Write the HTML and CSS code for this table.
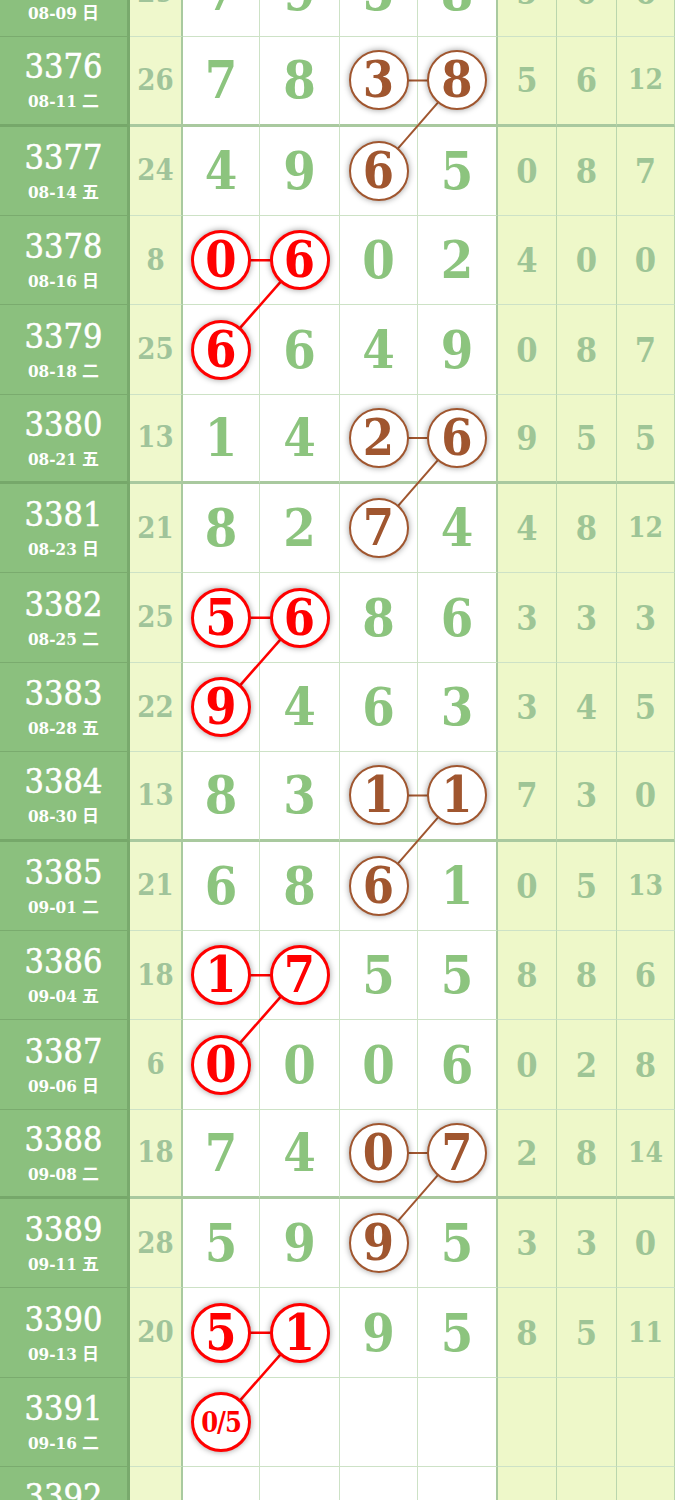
FILE: index.html
```html
<!DOCTYPE html>
<html lang="zh">
<head>
<meta charset="utf-8">
<title>走势图</title>
<link rel="stylesheet" href="styles.css">
</head>
<body>
<div class="board">
  <svg class="links" width="675" height="1610" viewBox="0 0 675 1610">
    <g class="lb">
      <line x1="378.5" y1="132.6" x2="457" y2="132.6"/><line x1="457" y1="132.6" x2="378.5" y2="222.9"/>
      <line x1="378.5" y1="490.1" x2="457" y2="490.1"/><line x1="457" y1="490.1" x2="378.5" y2="580.4"/>
      <line x1="378.5" y1="847.6" x2="457" y2="847.6"/><line x1="457" y1="847.6" x2="378.5" y2="937.9"/>
      <line x1="378.5" y1="1205.1" x2="457" y2="1205.1"/><line x1="457" y1="1205.1" x2="378.5" y2="1295.4"/>
    </g>
    <g class="lr">
      <line x1="221" y1="312.3" x2="299.5" y2="312.3"/><line x1="299.5" y1="312.3" x2="221" y2="401.7"/>
      <line x1="221" y1="669.8" x2="299.5" y2="669.8"/><line x1="299.5" y1="669.8" x2="221" y2="759.2"/>
      <line x1="221" y1="1027.3" x2="299.5" y2="1027.3"/><line x1="299.5" y1="1027.3" x2="221" y2="1116.7"/>
      <line x1="221" y1="1384.8" x2="299.5" y2="1384.8"/><line x1="299.5" y1="1384.8" x2="221" y2="1474.2"/>
    </g>
  </svg>

  <div class="row">
    <div class="c lab"><span class="no">3375</span><span class="dt">08-09 日</span></div>
    <div class="c sum">29</div>
    <div class="c w">7</div><div class="c w">9</div><div class="c w">5</div><div class="c w w4">8</div>
    <div class="c y">5</div><div class="c y">0</div><div class="c y">6</div>
  </div>
  <div class="row sep">
    <div class="c lab"><span class="no">3376</span><span class="dt">08-11 二</span></div>
    <div class="c sum">26</div>
    <div class="c w">7</div><div class="c w">8</div><div class="c w"><span class="ball b">3</span></div><div class="c w w4"><span class="ball b">8</span></div>
    <div class="c y">5</div><div class="c y">6</div><div class="c y two">12</div>
  </div>
  <div class="row">
    <div class="c lab"><span class="no">3377</span><span class="dt">08-14 五</span></div>
    <div class="c sum">24</div>
    <div class="c w">4</div><div class="c w">9</div><div class="c w"><span class="ball b">6</span></div><div class="c w w4">5</div>
    <div class="c y">0</div><div class="c y">8</div><div class="c y">7</div>
  </div>
  <div class="row">
    <div class="c lab"><span class="no">3378</span><span class="dt">08-16 日</span></div>
    <div class="c sum">8</div>
    <div class="c w"><span class="ball r">0</span></div><div class="c w"><span class="ball r">6</span></div><div class="c w">0</div><div class="c w w4">2</div>
    <div class="c y">4</div><div class="c y">0</div><div class="c y">0</div>
  </div>
  <div class="row">
    <div class="c lab"><span class="no">3379</span><span class="dt">08-18 二</span></div>
    <div class="c sum">25</div>
    <div class="c w"><span class="ball r">6</span></div><div class="c w">6</div><div class="c w">4</div><div class="c w w4">9</div>
    <div class="c y">0</div><div class="c y">8</div><div class="c y">7</div>
  </div>
  <div class="row sep">
    <div class="c lab"><span class="no">3380</span><span class="dt">08-21 五</span></div>
    <div class="c sum">13</div>
    <div class="c w">1</div><div class="c w">4</div><div class="c w"><span class="ball b">2</span></div><div class="c w w4"><span class="ball b">6</span></div>
    <div class="c y">9</div><div class="c y">5</div><div class="c y">5</div>
  </div>
  <div class="row">
    <div class="c lab"><span class="no">3381</span><span class="dt">08-23 日</span></div>
    <div class="c sum">21</div>
    <div class="c w">8</div><div class="c w">2</div><div class="c w"><span class="ball b">7</span></div><div class="c w w4">4</div>
    <div class="c y">4</div><div class="c y">8</div><div class="c y two">12</div>
  </div>
  <div class="row">
    <div class="c lab"><span class="no">3382</span><span class="dt">08-25 二</span></div>
    <div class="c sum">25</div>
    <div class="c w"><span class="ball r">5</span></div><div class="c w"><span class="ball r">6</span></div><div class="c w">8</div><div class="c w w4">6</div>
    <div class="c y">3</div><div class="c y">3</div><div class="c y">3</div>
  </div>
  <div class="row">
    <div class="c lab"><span class="no">3383</span><span class="dt">08-28 五</span></div>
    <div class="c sum">22</div>
    <div class="c w"><span class="ball r">9</span></div><div class="c w">4</div><div class="c w">6</div><div class="c w w4">3</div>
    <div class="c y">3</div><div class="c y">4</div><div class="c y">5</div>
  </div>
  <div class="row sep">
    <div class="c lab"><span class="no">3384</span><span class="dt">08-30 日</span></div>
    <div class="c sum">13</div>
    <div class="c w">8</div><div class="c w">3</div><div class="c w"><span class="ball b">1</span></div><div class="c w w4"><span class="ball b">1</span></div>
    <div class="c y">7</div><div class="c y">3</div><div class="c y">0</div>
  </div>
  <div class="row">
    <div class="c lab"><span class="no">3385</span><span class="dt">09-01 二</span></div>
    <div class="c sum">21</div>
    <div class="c w">6</div><div class="c w">8</div><div class="c w"><span class="ball b">6</span></div><div class="c w w4">1</div>
    <div class="c y">0</div><div class="c y">5</div><div class="c y two">13</div>
  </div>
  <div class="row">
    <div class="c lab"><span class="no">3386</span><span class="dt">09-04 五</span></div>
    <div class="c sum">18</div>
    <div class="c w"><span class="ball r">1</span></div><div class="c w"><span class="ball r">7</span></div><div class="c w">5</div><div class="c w w4">5</div>
    <div class="c y">8</div><div class="c y">8</div><div class="c y">6</div>
  </div>
  <div class="row">
    <div class="c lab"><span class="no">3387</span><span class="dt">09-06 日</span></div>
    <div class="c sum">6</div>
    <div class="c w"><span class="ball r">0</span></div><div class="c w">0</div><div class="c w">0</div><div class="c w w4">6</div>
    <div class="c y">0</div><div class="c y">2</div><div class="c y">8</div>
  </div>
  <div class="row sep">
    <div class="c lab"><span class="no">3388</span><span class="dt">09-08 二</span></div>
    <div class="c sum">18</div>
    <div class="c w">7</div><div class="c w">4</div><div class="c w"><span class="ball b">0</span></div><div class="c w w4"><span class="ball b">7</span></div>
    <div class="c y">2</div><div class="c y">8</div><div class="c y two">14</div>
  </div>
  <div class="row">
    <div class="c lab"><span class="no">3389</span><span class="dt">09-11 五</span></div>
    <div class="c sum">28</div>
    <div class="c w">5</div><div class="c w">9</div><div class="c w"><span class="ball b">9</span></div><div class="c w w4">5</div>
    <div class="c y">3</div><div class="c y">3</div><div class="c y">0</div>
  </div>
  <div class="row">
    <div class="c lab"><span class="no">3390</span><span class="dt">09-13 日</span></div>
    <div class="c sum">20</div>
    <div class="c w"><span class="ball r">5</span></div><div class="c w"><span class="ball r">1</span></div><div class="c w">9</div><div class="c w w4">5</div>
    <div class="c y">8</div><div class="c y">5</div><div class="c y two">11</div>
  </div>
  <div class="row">
    <div class="c lab"><span class="no">3391</span><span class="dt">09-16 二</span></div>
    <div class="c sum"></div>
    <div class="c w"><span class="ball r sm">0/5</span></div><div class="c w"></div><div class="c w"></div><div class="c w w4"></div>
    <div class="c y"></div><div class="c y"></div><div class="c y"></div>
  </div>
  <div class="row sep">
    <div class="c lab"><span class="no">3392</span><span class="dt">09-18 五</span></div>
    <div class="c sum"></div>
    <div class="c w"></div><div class="c w"></div><div class="c w"></div><div class="c w w4"></div>
    <div class="c y"></div><div class="c y"></div><div class="c y"></div>
  </div>
</div>
</body>
</html>
```

FILE: styles.css
```css
html, body {
  margin: 0;
  padding: 0;
  background: #ffffff;
}
body {
  width: 675px;
  height: 1500px;
  overflow: hidden;
  font-family: "DejaVu Serif Condensed", "DejaVu Serif", serif;
}
.board {
  position: relative;
  width: 675px;
  margin-top: -52.2px;
}
.links {
  position: absolute;
  left: 0;
  top: 0;
  z-index: 0;
}
.links .lb line {
  stroke: #a0562f;
  stroke-width: 2;
}
.links .lr line {
  stroke: #ff0000;
  stroke-width: 2.6;
}
.row {
  display: grid;
  grid-template-columns: 130px 53px 77px 80px 78px 80px 59px 60px 58px;
  height: 89.375px;
}
.c {
  box-sizing: border-box;
  display: flex;
  align-items: center;
  justify-content: center;
  border-bottom: 1.5px solid #cde2c6;
  border-right: 1px solid #cde2c6;
  line-height: 1;
  font-weight: bold;
}
.row.sep .c {
  border-bottom: 3px solid #a9c99f;
}
.lab {
  flex-direction: column;
  background: #8bc07e;
  color: #ffffff;
  border-right: 3px solid #79aa6d;
  border-bottom-color: #7aab6e;
}
.row.sep .lab {
  border-bottom-color: #76a86a;
}
.no {
  font-weight: normal;
  font-size: 34px;
  line-height: 34px;
  -webkit-text-stroke: 0.5px #ffffff;
}
.dt {
  font-size: 17px;
  line-height: 20px;
  margin-top: 8px;
  font-family: "DejaVu Serif Condensed", "DejaVu Serif", "Noto Sans CJK SC", serif;
}
.sum {
  background: #eff8cc;
  color: #a0c49a;
  font-size: 29px;
  border-right: 2px solid #a9ca9f;
}
.w {
  background: #ffffff;
  color: #8cc47e;
  font-size: 52px;
}
.w4 {
  border-right: 2px solid #a9ca9f;
}
.y {
  background: #eef8c9;
  color: #9ec596;
  font-size: 34px;
  border-right-color: #bad6ad;
}
.y.two {
  font-size: 28px;
}
.ball {
  position: relative;
  z-index: 1;
  box-sizing: border-box;
  width: 60px;
  height: 60px;
  border-radius: 50%;
  background: #ffffff;
  display: flex;
  align-items: center;
  justify-content: center;
  font-size: 50px;
  font-weight: bold;
  box-shadow: 0 0 6px rgba(0, 0, 0, 0.4);
}
.ball.r {
  border: 3px solid #ff0000;
  color: #ff0000;
}
.ball.b {
  border: 2.5px solid #a0562f;
  color: #a0562f;
}
.ball.sm {
  font-size: 27px;
  letter-spacing: -1px;
}
```
